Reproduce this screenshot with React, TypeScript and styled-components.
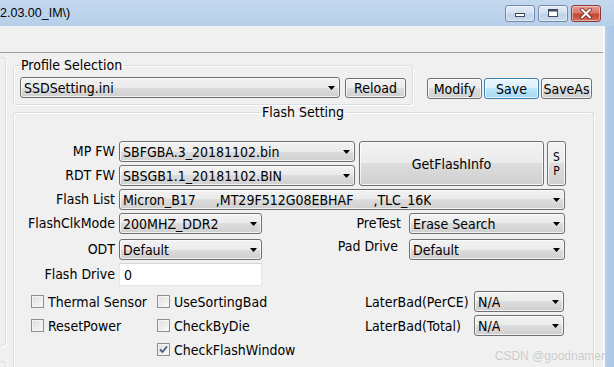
import React from 'react';
import styled, { createGlobalStyle } from 'styled-components';

const Global = createGlobalStyle`
  html, body { margin: 0; padding: 0; background: #f0f0f0; }
  body {
    font-family: "DejaVu Sans Condensed", "DejaVu Sans", sans-serif;
    font-stretch: condensed;
    font-size: 14px;
    color: #000;
  }
  * { box-sizing: border-box; }
`;

const Screen = styled.div`
  position: relative;
  width: 614px;
  height: 367px;
  overflow: hidden;
  display: flex;
  flex-direction: column;
  background: #f0f0f0;
`;

const TitleBar = styled.div`
  height: 26px;
  flex: none;
  display: flex;
  align-items: center;
  justify-content: space-between;
  padding-right: 13px;
  background: linear-gradient(#c3d8ee, #b7cfe9);
`;

const TitleText = styled.span`
  font-family: "Liberation Sans", Arial, sans-serif;
  font-stretch: normal;
  font-size: 12.5px;
  color: #000;
`;

const WinButtons = styled.div`
  display: flex;
  gap: 3px;
`;

const WinButton = styled.div<{ $close?: boolean }>`
  width: 30px;
  height: 17px;
  border-radius: 3px;
  display: flex;
  align-items: center;
  justify-content: center;
  border: 1px solid ${p => (p.$close ? '#8a3a33' : '#7189aa')};
  background: ${p =>
    p.$close
      ? 'linear-gradient(#e49a8f 0%, #d77a6b 45%, #c44532 55%, #cf6d58 100%)'
      : 'linear-gradient(#e3ecf6 0%, #d3e0ef 45%, #bfd2e8 55%, #cbdaec 100%)'};
  box-shadow: inset 0 0 0 1px rgba(255, 255, 255, 0.45);
`;

const Body = styled.div`
  flex: 1;
  display: flex;
  min-height: 0;
`;

const Main = styled.div`
  flex: 1;
  display: flex;
  flex-direction: column;
  min-width: 0;
`;

const RightFrame = styled.div`
  width: 11px;
  flex: none;
  border-left: 2px solid #f7f9fc;
  background: linear-gradient(90deg, #b5cfea, #a9c6e6);
`;

const MenuArea = styled.div`
  height: 27px;
  flex: none;
  border-bottom: 1px solid #a0a0a0;
`;

const Content = styled.div`
  flex: 1;
  display: flex;
  min-height: 0;
`;

const LeftStubs = styled.div`
  width: 6px;
  flex: none;
  display: flex;
  flex-direction: column;
  padding-top: 4px;
  gap: 15px;
`;

const Stub = styled.div<{ $h: number }>`
  height: ${p => p.$h}px;
  flex: none;
  border: 1px solid #d5dfe5;
  border-left: none;
  border-radius: 0 4px 4px 0;
  box-shadow: 1px 1px 0 #fff;
`;

const Panel = styled.div`
  flex: 1;
  display: flex;
  flex-direction: column;
  padding: 5px 0 0 7px;
`;

const TopRow = styled.div`
  display: flex;
  align-items: flex-start;
`;

const Group = styled.fieldset<{ $w: number }>`
  margin: 0;
  min-width: 0;
  width: ${p => p.$w}px;
  border: 1px solid #d5dfe5;
  border-radius: 3px;
  box-shadow: inset 1px 1px 0 #fff, 1px 1px 0 #fff;
`;

const ProfileGroup = styled(Group)`
  padding: 4px 5px 6px 6px;
  display: flex;
  align-items: center;
  gap: 5px;
`;

const FlashGroup = styled(Group)`
  padding: 21px 0 0 0;
  flex: 1;
  border-bottom: none;
  border-radius: 3px 3px 0 0;
`;

const Legend = styled.legend<{ $center?: boolean }>`
  padding: 0 2px 0 1px;
  line-height: 15px;
  ${p => (p.$center ? 'margin: 0 auto;' : '')}
`;

const PushButton = styled.div<{ $w: number; $h?: number; $default?: boolean }>`
  width: ${p => p.$w}px;
  height: ${p => p.$h ?? 21}px;
  flex: none;
  display: flex;
  flex-direction: column;
  align-items: center;
  justify-content: center;
  line-height: 14px;
  border-radius: 3px;
  border: 1px solid ${p => (p.$default ? '#3c7fb1' : '#707070')};
  background: ${p =>
    p.$default
      ? 'linear-gradient(#eaf6fd 0%, #d9f0fc 50%, #bee6fd 50%, #a7d9f5 100%)'
      : 'linear-gradient(#f2f2f2 0%, #ebebeb 50%, #dddddd 50%, #cfcfcf 100%)'};
  box-shadow: inset 0 0 0 1px rgba(255, 255, 255, 0.75);
`;

const StackedLetters = styled.span`
  display: flex;
  flex-direction: column;
  align-items: center;
  font-size: 12px;
  line-height: 14px;
`;

const ActionButtons = styled.div`
  display: flex;
  gap: 2px;
  margin: 20px 0 0 14px;
`;

const ComboBox = styled.div<{ $w: number }>`
  width: ${p => p.$w}px;
  height: 21px;
  flex: none;
  display: flex;
  align-items: center;
  justify-content: space-between;
  padding: 0 4px 0 3px;
  border: 1px solid #707070;
  border-radius: 3px;
  background: linear-gradient(#f2f2f2 0%, #ebebeb 50%, #dddddd 50%, #cfcfcf 100%);
  box-shadow: inset 0 0 0 1px rgba(255, 255, 255, 0.7);
  white-space: pre;
  overflow: hidden;
`;

const ComboText = styled.span`
  overflow: hidden;
  white-space: pre;
`;

const EditBox = styled.div<{ $w: number }>`
  width: ${p => p.$w}px;
  height: 23px;
  flex: none;
  display: flex;
  align-items: center;
  padding-left: 4px;
  background: #fff;
  border: 1px solid #e2e5ea;
  border-top-color: #d0d3d8;
`;

const Rows = styled.div`
  display: flex;
  flex-direction: column;
`;

const Row = styled.div<{ $mt?: number }>`
  display: flex;
  align-items: center;
  margin-top: ${p => p.$mt ?? 0}px;
`;

const FwColumn = styled.div`
  display: flex;
  flex-direction: column;
  gap: 3px;
  margin-right: 4px;
`;

const FieldLabel = styled.span<{ $w: number; $pr?: number; $top?: boolean }>`
  width: ${p => p.$w}px;
  flex: none;
  text-align: right;
  padding-right: ${p => p.$pr ?? 4}px;
  line-height: 15px;
  white-space: nowrap;
  ${p => (p.$top ? 'align-self: flex-start;' : '')}
`;

const LowerGrid = styled.div`
  display: grid;
  grid-template-columns: 126px 208px 109px 90px;
  grid-auto-rows: 21px;
  row-gap: 3px;
  margin: 5px 0 0 17px;
`;

const CheckItem = styled.label<{ $col: number }>`
  grid-column: ${p => p.$col};
  display: flex;
  align-items: center;
  gap: 4px;
  white-space: nowrap;
`;

const CheckBoxBox = styled.span`
  width: 13px;
  height: 13px;
  flex: none;
  display: flex;
  align-items: center;
  justify-content: center;
  border: 1px solid #8e8f8f;
  background: linear-gradient(135deg, #dcdcdc, #fbfbfb);
  box-shadow: inset 0 0 0 1px #f4f4f4;
`;

const GridLabel = styled.span`
  grid-column: 3;
  align-self: center;
  white-space: nowrap;
`;

const GridCombo = styled.div`
  grid-column: 4;
`;

const Watermark = styled.div`
  position: absolute;
  right: 9px;
  bottom: 4px;
  font-family: "Liberation Sans", Arial, sans-serif;
  font-stretch: normal;
  font-size: 12px;
  color: #c9c9c9;
  text-shadow: 0 0 1px #fff;
`;

const Arrow = () => (
  <svg width="7" height="4" viewBox="0 0 7 4" style={{ flex: 'none' }}>
    <path d="M0 0H7L3.5 4Z" fill="#000" />
  </svg>
);

const Combo: React.FC<{ w: number; value: string }> = ({ w, value }) => (
  <ComboBox $w={w}>
    <ComboText>{value}</ComboText>
    <Arrow />
  </ComboBox>
);

const Check: React.FC<{ col: number; label: string; checked?: boolean }> = ({ col, label, checked }) => (
  <CheckItem $col={col}>
    <CheckBoxBox>
      {checked && (
        <svg width="9" height="9" viewBox="0 0 9 9">
          <path d="M1 4.5L3.5 7L8 1.5" stroke="#4a5c86" strokeWidth="1.8" fill="none" />
        </svg>
      )}
    </CheckBoxBox>
    <span>{label}</span>
  </CheckItem>
);

const MinIcon = () => (
  <svg width="12" height="10" viewBox="0 0 12 10">
    <rect x="1.5" y="5.5" width="9" height="3" fill="#fff" stroke="#3d4b5c" />
  </svg>
);

const MaxIcon = () => (
  <svg width="12" height="10" viewBox="0 0 12 10">
    <rect x="1.5" y="1.5" width="9" height="7" fill="#fff" stroke="#3d4b5c" />
    <rect x="1.5" y="1.5" width="9" height="2" fill="#3d4b5c" />
    <rect x="3.5" y="4.5" width="5" height="2" fill="#fff" stroke="none" />
  </svg>
);

const CloseIcon = () => (
  <svg width="12" height="11" viewBox="0 0 12 11">
    <path d="M2 1.5L10 9.5M10 1.5L2 9.5" stroke="#6a2620" strokeWidth="3.6" strokeLinecap="round" />
    <path d="M2 1.5L10 9.5M10 1.5L2 9.5" stroke="#fff" strokeWidth="2" strokeLinecap="round" />
  </svg>
);

export default function App() {
  return (
    <>
      <Global />
      <Screen>
        <TitleBar>
          <TitleText>2.03.00_IM\)</TitleText>
          <WinButtons>
            <WinButton><MinIcon /></WinButton>
            <WinButton><MaxIcon /></WinButton>
            <WinButton $close><CloseIcon /></WinButton>
          </WinButtons>
        </TitleBar>
        <Body>
          <Main>
            <MenuArea />
            <Content>
              <LeftStubs>
                <Stub $h={289} />
                <Stub $h={40} />
              </LeftStubs>
              <Panel>
                <TopRow>
                  <ProfileGroup $w={400}>
                    <Legend>Profile Selection</Legend>
                    <Combo w={320} value="SSDSetting.ini" />
                    <PushButton $w={61} $h={20}>Reload</PushButton>
                  </ProfileGroup>
                  <ActionButtons>
                    <PushButton $w={55}>Modify</PushButton>
                    <PushButton $w={55} $default>Save</PushButton>
                    <PushButton $w={51}>SaveAs</PushButton>
                  </ActionButtons>
                </TopRow>
                <FlashGroup $w={581}>
                  <Legend $center>Flash Setting</Legend>
                  <Rows>
                    <Row>
                      <FwColumn>
                        <Row>
                          <FieldLabel $w={105}>MP FW</FieldLabel>
                          <Combo w={236} value="SBFGBA.3_20181102.bin" />
                        </Row>
                        <Row>
                          <FieldLabel $w={105}>RDT FW</FieldLabel>
                          <Combo w={236} value="SBSGB1.1_20181102.BIN" />
                        </Row>
                      </FwColumn>
                      <PushButton $w={185} $h={45}>GetFlashInfo</PushButton>
                      <PushButton $w={19} $h={45} style={{ marginLeft: 3 }}>
                        <StackedLetters>
                          <span>S</span>
                          <span>P</span>
                        </StackedLetters>
                      </PushButton>
                    </Row>
                    <Row $mt={3}>
                      <FieldLabel $w={105}>Flash List</FieldLabel>
                      <Combo w={446} value={'Micron_B17     ,MT29F512G08EBHAF     ,TLC_16K'} />
                    </Row>
                    <Row $mt={3}>
                      <FieldLabel $w={105}>FlashClkMode</FieldLabel>
                      <Combo w={143} value="200MHZ_DDR2" />
                      <FieldLabel $w={147} $pr={8}>PreTest</FieldLabel>
                      <Combo w={156} value="Erase Search" />
                    </Row>
                    <Row $mt={5}>
                      <FieldLabel $w={105}>ODT</FieldLabel>
                      <Combo w={143} value="Default" />
                      <FieldLabel $w={147} $pr={11} $top>Pad Drive</FieldLabel>
                      <Combo w={156} value="Default" />
                    </Row>
                    <Row $mt={3}>
                      <FieldLabel $w={105}>Flash Drive</FieldLabel>
                      <EditBox $w={143}>0</EditBox>
                    </Row>
                    <LowerGrid>
                      <Check col={1} label="Thermal Sensor" />
                      <Check col={2} label="UseSortingBad" />
                      <GridLabel>LaterBad(PerCE)</GridLabel>
                      <GridCombo><Combo w={90} value="N/A" /></GridCombo>
                      <Check col={1} label="ResetPower" />
                      <Check col={2} label="CheckByDie" />
                      <GridLabel>LaterBad(Total)</GridLabel>
                      <GridCombo><Combo w={90} value="N/A" /></GridCombo>
                      <Check col={2} label="CheckFlashWindow" checked />
                    </LowerGrid>
                  </Rows>
                </FlashGroup>
              </Panel>
            </Content>
          </Main>
          <RightFrame />
        </Body>
        <Watermark>CSDN @goodnamer</Watermark>
      </Screen>
    </>
  );
}
